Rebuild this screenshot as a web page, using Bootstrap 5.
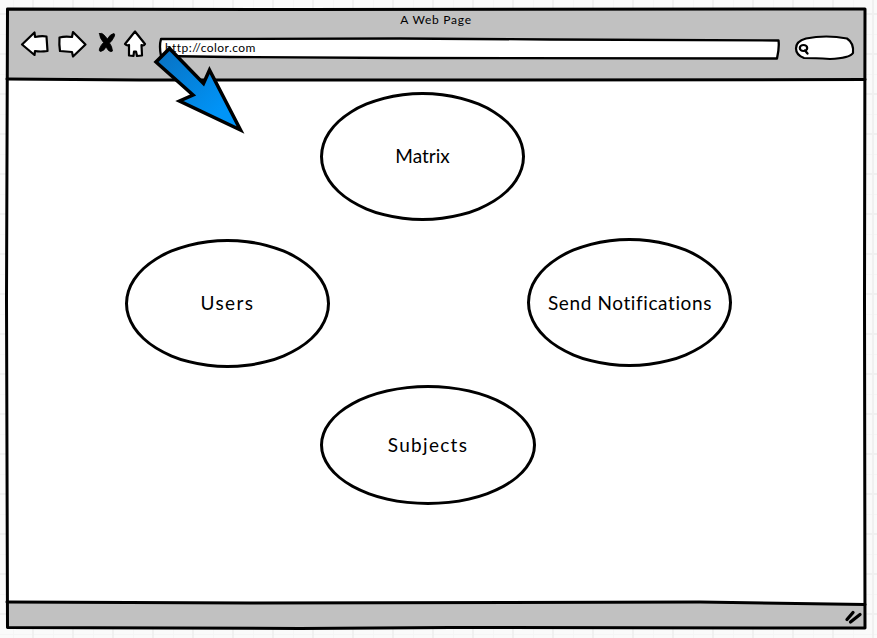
<!DOCTYPE html>
<html lang="en">
<head>
<meta charset="utf-8">
<meta name="viewport" content="width=device-width, initial-scale=1">
<title>A Web Page</title>
<link href="https://cdn.jsdelivr.net/npm/bootstrap@5.3.0/dist/css/bootstrap.min.css" rel="stylesheet">
<style>
body{height:638px;color:#000;font-family:Lato,"Open Sans",sans-serif;background-color:#fafafa;
background-image:linear-gradient(90deg,#f0f0f0 2px,transparent 2px),linear-gradient(#f0f0f0 2px,transparent 2px),linear-gradient(90deg,#f5f5f5 1px,transparent 1px),linear-gradient(#f5f5f5 1px,transparent 1px);
background-size:40px 40px,40px 40px,20px 20px,20px 20px;background-position:32px 0,0 13px,13px 0,0 14px}
.browser{width:861px;height:623px;margin:7px 0 0 5px}
.toolbar{height:73px}
.sketch{width:877px;height:638px;pointer-events:none}
.page-title{font-size:12px;line-height:16px;padding:5px 0 0 1px;letter-spacing:.75px}
.address{font-size:12px;line-height:16px;margin:12px 0 0 160px;letter-spacing:.45px}
.node{border:3px solid #000;border-radius:50%;font-size:19px;line-height:24px;letter-spacing:.6px;width:205px;height:129px;padding-bottom:2px}
.node-matrix{left:315px;top:12px;letter-spacing:0}
.node-users{left:120px;top:159px;letter-spacing:1.4px}
.node-send{left:522px;top:158px;padding:1px 0 0 1px}
.node-subjects{left:315px;top:305px;width:216px;height:120px;letter-spacing:1.3px;padding-bottom:0}
</style>
</head>
<body class="overflow-hidden position-relative">
<svg class="sketch position-absolute top-0 start-0" viewBox="0 0 877 638" aria-hidden="true" fill="none" stroke="#000" stroke-width="3" stroke-linejoin="round" stroke-linecap="round">
<path d="M7 9H865V628L400 627 7 628Z" fill="#fff" stroke="none"/>
<path d="M7 9H865V79.500H400L7 79Z M7 602L700 602 865 604.500V628H7Z" fill="#c1c1c1" stroke="none"/>
<path d="M7.500 9L300 9.500 865 9 864.500 300 865 628 450 627.500 300 628.500 7.500 627.500 6.500 300Z"/>
<path d="M7 79L140 80 500 80 865 79.500M7 602L250 603 700 602 865 604.500"/>
<g fill="#fff" stroke-width="2.200">
<path d="M22 44.500L34.500 32.500 35 37Q42 35.500 46.500 36.500L47.500 51Q40 52 35 51L34.500 55Z"/>
<path d="M59.500 37.500Q65 36 72 37L73 32 85.500 44.500 73 56.500 72 52 60 51Q59 45 59.500 37.500Z"/>
<path d="M135 31.500L125 44Q127 46 129 45L129 55.500 133.500 56 134 51.500H136L137 56 142 55.500 141.500 45Q144 46 145 44Z"/>
</g>
<path d="M99.500 33.500Q102 32.500 104 35L107.500 39Q110 34 114 33.500Q115.500 34.500 114 37Q112 41 109.500 43Q112 46 112.500 51Q111 52.500 108.500 50.500L106 47Q104 51 100.500 51.500Q98.500 51 99.500 48.500Q101 45 103.500 42.500Q99.500 38 99.500 33.500Z" fill="#000" stroke-width=".8"/>
<path d="M161 39L400 38.500 550 39.500 778.500 40.500Q779.500 47 777 58.500L400 58 230 57 161 56Q159 46 161 39Z" fill="#fff" stroke-width="2.300"/>
<path d="M806 38.500Q826 34.500 847 38.500Q854 43 853 53Q850 58 830 59Q815 58 804 58Q796 55 796 48.500Q796 41 806 38.500Z" fill="#fff" stroke-width="2.200"/>
<ellipse cx="803.500" cy="48" rx="3.700" ry="3" stroke-width="2.200"/><path d="M805 50.500L807.500 53.500" stroke-width="2.300"/>
<path d="M847 619.500L853 612.500M850.500 622L860 614.500" stroke-width="3.300"/>
</svg>
<main class="browser position-relative">
<header class="toolbar">
<div class="page-title text-center">A Web Page</div>
<div class="address">http://color.com</div>
</header>
<section class="position-relative">
<div class="node node-matrix position-absolute d-flex align-items-center justify-content-center text-nowrap">Matrix</div>
<div class="node node-users position-absolute d-flex align-items-center justify-content-center text-nowrap">Users</div>
<div class="node node-send position-absolute d-flex align-items-center justify-content-center text-nowrap">Send Notifications</div>
<div class="node node-subjects position-absolute d-flex align-items-center justify-content-center text-nowrap">Subjects</div>
</section>
</main>
<svg class="sketch position-absolute top-0 start-0" viewBox="0 0 877 638" aria-hidden="true">
<defs><linearGradient id="blue" gradientUnits="userSpaceOnUse" x1="160" y1="55" x2="220" y2="112"><stop stop-color="#0873c4"/><stop offset="1" stop-color="#0094f8"/></linearGradient></defs>
<path d="M169.500 48.500L203.500 83.500 209.500 70 240.500 130 179.500 101 193 95 156 62Z" fill="url(#blue)" stroke="#000" stroke-width="3.500"/>
</svg>
<script src="https://cdn.jsdelivr.net/npm/bootstrap@5.3.0/dist/js/bootstrap.bundle.min.js"></script>
</body>
</html>
